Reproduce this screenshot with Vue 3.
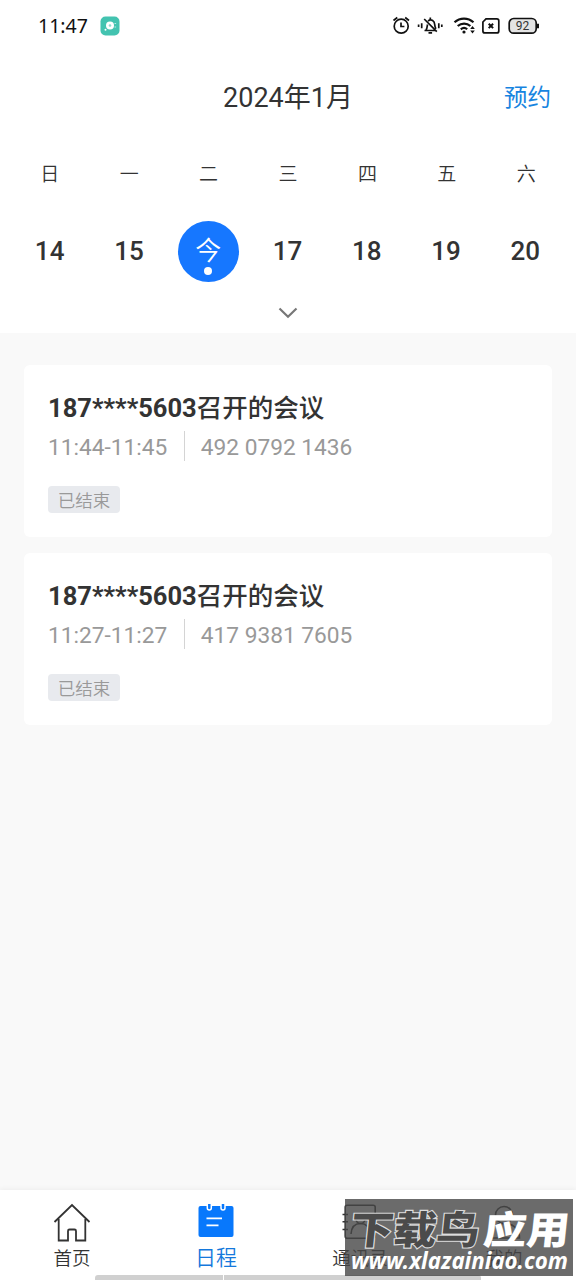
<template>
  <div class="page">
    <header class="header">
      <div class="status-bar">
        <span class="clock">11:47</span>
        <svg class="app-badge" viewBox="0 0 20 20">
          <rect x="0.5" y="0.5" width="19" height="19" rx="5" fill="#43c3b0" />
          <circle cx="10" cy="9.5" r="4" fill="#fff" />
          <circle cx="10" cy="9.5" r="1.3" fill="#8fdccf" />
          <circle cx="5.5" cy="13.8" r="1" fill="#fff" />
          <path d="M14.5 7.5h1.6M14.5 11h1.6" stroke="#b9ebe3" stroke-width="1" />
        </svg>
        <svg class="status-icons" viewBox="0 0 150 24" fill="none" stroke="#111" stroke-width="1.7">
          <!-- alarm -->
          <circle cx="11.2" cy="14.2" r="7" />
          <path d="M11 10.5v4h3.4M3.5 8.5l3.8-3M15.2 5.5l3.8 3" />
          <!-- muted bell -->
          <path d="M34.5 18.5h10.500M36 18c1.200-1.500 1.200-3.500 1.500-5.500M38 9c3.500-2.500 6.600 0 6.700 3.500.1 2 .5 3 1.300 4.200M34.200 7L46.800 19.600M38.500 20.800h3.600M40.300 5.500v2.500" />
          <path d="M31.700 11.200v5M28.600 12.400v2.600M48.800 11.200v5M51.800 12.400v2.600" />
          <!-- wifi -->
          <path d="M64.500 10.300c5.500-4.900 13.500-4.900 19 0M67.700 14c3.800-3.300 9-3.300 12.700 0M70.800 17.300c2-1.700 4.500-1.700 6.400 0" stroke-width="2.2" />
          <circle cx="74" cy="20" r="1.6" fill="#111" stroke="none" />
          <path d="M80.200 17l2.300-2.900 2.300 2.900zM80.200 18.600l2.300 2.900 2.300-2.900z" fill="#111" stroke="none" />
          <!-- sim -->
          <path d="M96 6.900h10.800q2 0 2 2v10q0 2-2 2H94.900q-2 0-2-2V10z" />
          <path d="M98.700 11.700l4.400 4.400M103.100 11.700l-4.400 4.400" stroke-width="2" />
          <!-- battery -->
          <rect x="119.200" y="6.500" width="27" height="14.700" rx="4.500" fill="#e4e4e4" />
          <path d="M148 11.800v4.400" stroke-width="2" />
          <text x="132.500" y="18" text-anchor="middle" fill="#333" stroke="none">92</text>
        </svg>
      </div>

      <div class="title-bar">
        <span></span>
        <h1 class="month">2024年1月</h1>
        <a class="book">预约</a>
      </div>

      <div class="week">
        <span v-for="name in weekNames" :key="name" class="week-name">{{ name }}</span>
      </div>
      <div class="days">
        <div v-for="day in days" :key="day" class="day" @click="selected = day">
          <span :class="['day-text', { active: selected === day }]">{{ day }}</span>
        </div>
      </div>
      <svg class="expand" viewBox="0 0 20 12">
        <path d="M1.5 1.5L10 9.8l8.5-8.3" fill="none" stroke="#777" stroke-width="2.2" />
      </svg>
    </header>

    <main class="list">
      <section v-for="meeting in meetings" :key="meeting.code" class="card">
        <h2 class="card-title">{{ meeting.phone }}<span class="card-suffix">召开的会议</span></h2>
        <div class="card-info">
          <span class="card-time">{{ meeting.time }}</span>
          <span class="card-code">{{ meeting.code }}</span>
        </div>
        <span class="tag">已结束</span>
      </section>
    </main>

    <nav class="tabbar">
      <a class="tab">
        <svg class="tab-icon" viewBox="0 0 40 40" fill="none" stroke="#333" stroke-width="1.8">
          <path d="M2.500 20L20 3l17.500 17M6.700 17v21.500h9.300V29q0-1.500 1.500-1.500h5q1.500 0 1.500 1.500v9.500h9.300V17" />
        </svg>
        <span>首页</span>
      </a>
      <a class="tab current">
        <svg class="tab-icon" viewBox="0 0 40 40">
          <rect x="2.500" y="4" width="35" height="31" rx="2" fill="#0878fc" />
          <path d="M11.300 2v4q0 2 2 2t2-2V2M25 2v4q0 2 2 2t2-2V2" fill="#0878fc" stroke="#fff" stroke-width="1.5" />
          <path d="M10.500 16.300H26M10.500 23.300H22.500" stroke="#fff" stroke-width="1.7" />
        </svg>
        <span>日程</span>
      </a>
      <a class="tab">
        <svg class="tab-icon" viewBox="0 0 40 40" fill="none" stroke="#333" stroke-width="1.6">
          <rect x="5.200" y="3.300" width="30" height="33" rx="2" />
          <circle cx="20.500" cy="17" r="4.500" />
          <path d="M11 32c.5-7 4-10.500 9.500-10.500s9 3.500 9.500 10.500M2.500 12.500h5.500M2.500 19.800h5.500M2.500 27.500h5.500" />
        </svg>
        <span>通讯录</span>
      </a>
      <a class="tab">
        <svg class="tab-icon" viewBox="0 0 40 40" fill="none" stroke="#333" stroke-width="1.6">
          <circle cx="20" cy="13" r="8.500" />
          <path d="M4.500 36c0-9 6-14.500 15.500-14.500s15.500 5.500 15.500 14.500z" />
        </svg>
        <span>我的</span>
      </a>
      <i class="home-line"></i>
    </nav>

    <div class="watermark">
      <svg viewBox="0 0 229 77">
        <g class="mark-name" transform="skewX(-6)">
          <text transform="translate(9 45) scale(1 0.9)" class="mark-dark">下载鸟</text>
          <text transform="translate(142 45) scale(1 0.9)" class="mark-light">应用</text>
        </g>
        <text x="6" y="70" textLength="217" lengthAdjust="spacingAndGlyphs" class="mark-url">www.xlazainiao.com</text>
      </svg>
    </div>
  </div>
</template>

<script setup>
import { ref } from 'vue';

const weekNames = ['日', '一', '二', '三', '四', '五', '六'];
const days = ['14', '15', '今', '17', '18', '19', '20'];
const selected = ref('今');

const meetings = [
  { phone: '187****5603', time: '11:44-11:45', code: '492 0792 1436' },
  { phone: '187****5603', time: '11:27-11:27', code: '417 9381 7605' },
];
</script>

<style>
body {
  margin: 0;
  background: #f9f9f9;
}
</style>

<style scoped>
.page {
  position: relative;
  display: flex;
  flex-direction: column;
  height: 1280px;
  overflow: hidden;
  background: #f9f9f9;
  color: #333;
  font-family: Roboto, "Noto Sans CJK SC", sans-serif;
}

.header {
  display: flex;
  flex-direction: column;
  height: 333px;
  background: #fff;
}

.status-bar {
  display: flex;
  align-items: center;
  height: 51px;
  padding: 0 36px 0 38px;
}

.clock {
  width: 62px;
  color: #111;
  font: 19.5px/24px "Noto Sans", sans-serif;
  white-space: nowrap;
}

.app-badge {
  width: 20px;
  height: 20px;
}

.status-icons {
  width: 150px;
  height: 24px;
  margin-bottom: 4px;
  margin-left: auto;
  font: 12px Roboto, sans-serif;
}

.title-bar {
  display: grid;
  grid-template-columns: 1fr auto 1fr;
  align-items: center;
  height: 88px;
  padding: 0 25px;
}

.month {
  margin: 0;
  font-size: 27px;
  font-weight: 400;
}

.book {
  justify-self: end;
  padding-top: 2px;
  color: #1684e0;
  font-size: 23.5px;
}

.week,
.days {
  display: flex;
  padding: 0 10px;
}

.week {
  height: 60px;
  margin-top: 3px;
  align-items: center;
}

.week-name,
.day {
  flex: 1;
  text-align: center;
}

.week-name {
  font-size: 19px;
  font-weight: 350;
}

.days {
  margin-top: 19px;
  padding-right: 11px;
}

.day {
  display: flex;
  justify-content: center;
}

.day-text {
  position: relative;
  width: 61px;
  height: 61px;
  border-radius: 50%;
  font-size: 26px;
  font-weight: 500;
  line-height: 61px;
  text-align: center;
}

.day-text.active {
  background: #1677ff;
  color: #fff;
  font-size: 26px;
  font-weight: 350;
  line-height: 60px;
}

.day-text.active::after {
  position: absolute;
  bottom: 7px;
  left: 26.5px;
  width: 8px;
  height: 8px;
  border-radius: 50%;
  background: #fff;
  content: "";
}

.expand {
  align-self: center;
  width: 20px;
  height: 12px;
  margin-top: 25px;
}

.list {
  display: flex;
  flex: 1;
  flex-direction: column;
  gap: 16px;
  padding: 32px 24px;
}

.card {
  box-sizing: border-box;
  height: 172px;
  padding: 24px;
  border-radius: 6px;
  background: #fff;
}

.card-title {
  height: 37px;
  margin: 0;
  font-size: 25.5px;
  font-weight: 700;
  line-height: 38px;
}

.card-suffix {
  font-weight: 500;
}

.card-info {
  display: flex;
  height: 30px;
  margin-top: 5px;
  color: #999;
  font-size: 22.7px;
  line-height: 34px;
}

.card-time {
  padding-right: 16.5px;
}

.card-code {
  padding-left: 16px;
  border-left: 1px solid #d4d4d4;
}

.tag {
  display: block;
  width: 72px;
  height: 27px;
  margin-top: 25px;
  border-radius: 4px;
  background: #e8eaee;
  color: #999;
  font-size: 17.5px;
  font-weight: 350;
  line-height: 30px;
  text-align: center;
}

.tabbar {
  position: relative;
  display: flex;
  height: 90px;
  background: #fff;
  box-shadow: 0 -1px 5px rgba(0, 0, 0, 0.05);
}

.tab {
  display: flex;
  flex: 1;
  flex-direction: column;
  align-items: center;
  padding-top: 12px;
  font-size: 18.5px;
  font-weight: 350;
  line-height: 34px;
}

.tab-icon {
  width: 40px;
  height: 40px;
}

.tab.current {
  color: #1478dc;
  font-size: 21px;
  line-height: 33px;
}

.home-line {
  position: absolute;
  bottom: 0;
  left: 95px;
  width: 386px;
  height: 5px;
  border-radius: 3px 3px 0 0;
  background: linear-gradient(to right, #d0d0d0 128px, #fff 128px 129px, #d0d0d0 129px);
}

.watermark {
  position: absolute;
  top: 1199px;
  left: 344.5px;
  width: 228.5px;
  height: 77px;
  background: rgba(70, 70, 70, 0.8);
}

.watermark svg {
  display: block;
  width: 229px;
  height: 77px;
}

.mark-name {
  font-size: 43px;
  font-weight: 900;
}

.mark-dark {
  fill: #4b4b4b;
  stroke: #ddd;
  stroke-width: 2.5px;
  paint-order: stroke;
}

.mark-light {
  fill: #fff;
}

.mark-url {
  fill: #fff;
  font: italic 700 23px "Noto Sans", sans-serif;
}
</style>
